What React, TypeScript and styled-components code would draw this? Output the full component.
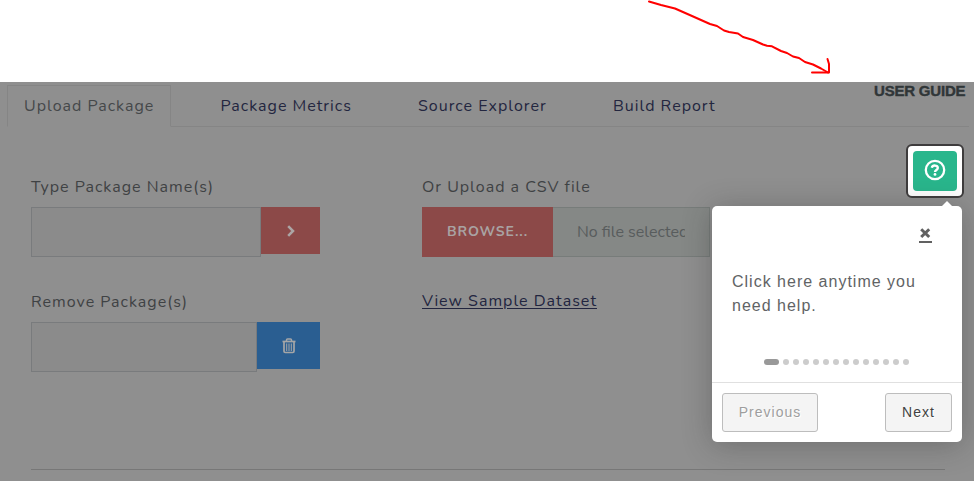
import React from "react";
import styled, { createGlobalStyle } from "styled-components";

const GlobalStyle = createGlobalStyle`
  * { box-sizing: border-box; }
  body { margin: 0; background: #fff; font-family: Nunito, Lato, sans-serif; }
  button, input { font: inherit; }
`;

const Page = styled.div`
  width: 974px;
  height: 481px;
  display: flex;
  flex-direction: column;
  position: relative;
  overflow: hidden;
`;

const Header = styled.header`
  height: 82px;
  flex: none;
  background: #fff;
`;

const Pointer = styled.svg`
  display: block;
  margin-left: 640px;
`;

const Workspace = styled.main`
  flex: 1;
  background: #8f8f8f;
  padding: 3px 5px 0 7px;
`;

const Tabs = styled.nav`
  display: flex;
  height: 42px;
  border-bottom: 1px solid #858585;
`;

const Tab = styled.a<{ $active?: boolean; $width: number }>`
  width: ${(p) => p.$width}px;
  height: 42px;
  padding: ${(p) => (p.$active ? "0 0 0 16px" : "1px 0 0 49.5px")};
  font-size: 16px;
  line-height: 41px;
  letter-spacing: 1px;
  white-space: nowrap;
  color: ${(p) => (p.$active ? "#45484a" : "#23263f")};
  ${(p) => p.$active && "border: 1px solid #858585; border-bottom-color: #8f8f8f;"}
`;

const GuideLabel = styled.div`
  position: absolute;
  top: 82px;
  left: 874px;
  font: bold 15px/17px "Liberation Sans", Arial, sans-serif;
  letter-spacing: -0.2px;
  white-space: nowrap;
  color: #303638;
  -webkit-text-stroke: 0.4px #303638;
`;

const Form = styled.section`
  display: grid;
  grid-template-columns: 289px 288px;
  grid-auto-rows: 115px;
  align-content: start;
  column-gap: 102px;
  margin: 0 24px;
  padding-top: 48px;
  height: 343px;
  width: 914px;
  border-bottom: 1px solid #777;
`;

const Field = styled.div`
  min-width: 0;
`;

const Label = styled.label`
  display: block;
  height: 32px;
  font-size: 16px;
  line-height: 24px;
  letter-spacing: 1px;
  white-space: nowrap;
  color: #3f4244;
`;

const InputRow = styled.div`
  display: flex;
  align-items: flex-start;
`;

const TextInput = styled.input`
  flex: 1;
  min-width: 0;
  height: 50px;
  border: 1px solid #797b7d;
  border-radius: 0;
  background: #8b8b8b;
  outline: none;
`;

const ActionButton = styled.button<{ $tone: string; $width: number }>`
  width: ${(p) => p.$width}px;
  height: 47px;
  padding: 0;
  border: 0;
  display: flex;
  align-items: center;
  justify-content: center;
  background: ${(p) => p.$tone};
`;

const BrowseButton = styled.button`
  width: 131px;
  height: 50px;
  border: 0;
  padding: 0 0 2px;
  background: #8c4948;
  color: #a9a3a3;
  font-size: 14px;
  font-weight: 700;
  letter-spacing: 0.9px;
`;

const FileName = styled.div`
  flex: 1;
  height: 50px;
  padding: 0 0 0 24px;
  border: 1px solid #777c7a;
  border-left: 0;
  background: #858886;
  color: #585c5d;
  font-size: 16px;
  line-height: 48px;
`;

const FileText = styled.div`
  width: 108px;
  overflow: hidden;
  white-space: nowrap;
`;

const SampleLink = styled.a`
  display: block;
  margin-top: -1px;
  font-size: 16px;
  line-height: 24px;
  letter-spacing: 1px;
  white-space: nowrap;
  color: #22253f;
  text-decoration: underline;
  text-decoration-thickness: 1px;
  text-underline-offset: 2px;
`;

const HelpFrame = styled.div`
  position: absolute;
  left: 906px;
  top: 144px;
  width: 58px;
  height: 54px;
  padding: 5px;
  border: 2px solid #3e3c3d;
  border-radius: 6px;
  background: #fff;
`;

const HelpButton = styled.button`
  display: flex;
  width: 44px;
  height: 40px;
  padding: 0 0 3px;
  align-items: center;
  justify-content: center;
  border: 0;
  border-radius: 4px;
  background: #29b68c;
`;

const Popover = styled.aside`
  position: absolute;
  left: 712px;
  top: 206px;
  width: 250px;
  height: 236px;
  display: flex;
  flex-direction: column;
  border-radius: 5px;
  background: #fff;
  box-shadow: 0 3px 30px rgba(33, 33, 33, 0.3);
  font-family: "Liberation Sans", Arial, sans-serif;
`;

const PopoverArrow = styled.div`
  position: absolute;
  right: 10px;
  top: -5px;
  border: 5px solid transparent;
  border-top: 0;
  border-bottom-color: #fff;
`;

const CloseRow = styled.div`
  height: 64px;
  display: flex;
  justify-content: flex-end;
  padding: 22px 30px 0 0;
`;

const Message = styled.p`
  margin: 0;
  padding-left: 20px;
  height: 89px;
  font-size: 16px;
  line-height: 24px;
  letter-spacing: 1px;
  color: #616365;
`;

const Steps = styled.div`
  display: flex;
  justify-content: center;
  gap: 4px;
  height: 23px;
  padding-right: 1px;
`;

const Dot = styled.span<{ $active?: boolean }>`
  width: ${(p) => (p.$active ? 15 : 6)}px;
  height: 6px;
  border-radius: 3px;
  background: ${(p) => (p.$active ? "#999" : "#ccc")};
`;

const Footer = styled.footer`
  height: 60px;
  padding: 10px;
  display: flex;
  justify-content: space-between;
  border-top: 1px solid #e0e0e0;
`;

const StepButton = styled.button<{ $width: number; $muted?: boolean }>`
  width: ${(p) => p.$width}px;
  height: 39px;
  padding: 0 0 2px;
  border: 1px solid #bdbdbd;
  border-radius: 3px;
  background: #f4f4f4;
  color: ${(p) => (p.$muted ? "#9e9e9e" : "#424242")};
  font-size: 14px;
  letter-spacing: 1px;
  text-shadow: 1px 1px 0 #fff;
`;

export default function App() {
  return (
    <Page>
      <GlobalStyle />
      <Header>
        <Pointer width="210" height="80" viewBox="640 0 210 80" fill="none" stroke="#f00" strokeWidth="2" strokeLinecap="round" strokeLinejoin="round">
          <path d="M649 1.5 L661 5 L675 8.5 L692 16 L710 24 L717 26 L724 30.5 L729 32 L738 33.5 L743 37 L753 40 L763 44.5 L767 45.7 L772 46.3 L781 51 L787 53 L793 56.5 L799 58 L805 62 L813 64.5 L821 68.5 L828 72.5" />
          <path d="M827.5 59 L829 64 L829 72.5 L812 72.5" />
        </Pointer>
      </Header>
      <Workspace>
        <Tabs>
          <Tab $active $width={164}>Upload Package</Tab>
          <Tab $width={197.5}>Package Metrics</Tab>
          <Tab $width={195}>Source Explorer</Tab>
          <Tab $width={160}>Build Report</Tab>
        </Tabs>
        <Form>
          <Field>
            <Label>Type Package Name(s)</Label>
            <InputRow>
              <TextInput aria-label="Package names" />
              <ActionButton $tone="#8c4948" $width={59} aria-label="Add packages">
                <svg width="8" height="12" viewBox="0 0 8 12" fill="none" stroke="#aca5a5" strokeWidth="2.5">
                  <path d="M1.2 1.2 L6 6 L1.2 10.8" />
                </svg>
              </ActionButton>
            </InputRow>
          </Field>
          <Field>
            <Label>Or Upload a CSV file</Label>
            <InputRow>
              <BrowseButton>BROWSE...</BrowseButton>
              <FileName><FileText>No file selected</FileText></FileName>
            </InputRow>
          </Field>
          <Field>
            <Label>Remove Package(s)</Label>
            <InputRow>
              <TextInput aria-label="Packages to remove" />
              <ActionButton $tone="#2a5e91" $width={63} aria-label="Remove packages">
                <svg width="14" height="16" viewBox="0 0 14 16" fill="none" stroke="#a5a6a7">
                  <path d="M0.5 3.5 H13.5" strokeWidth="1.7" />
                  <path d="M4.5 3 V2 Q4.5 1 5.5 1 H8.5 Q9.5 1 9.5 2 V3" strokeWidth="1.5" />
                  <path d="M2 4 V13.2 Q2 14.5 3.2 14.5 H10.8 Q12 14.5 12 13.2 V4" strokeWidth="1.7" />
                  <path d="M4.7 5.5 V13 M7 5.5 V13 M9.3 5.5 V13" strokeWidth="1" />
                </svg>
              </ActionButton>
            </InputRow>
          </Field>
          <Field>
            <SampleLink>View Sample Dataset</SampleLink>
          </Field>
        </Form>
      </Workspace>
      <GuideLabel>USER GUIDE</GuideLabel>
      <HelpFrame>
        <HelpButton aria-label="Help">
          <svg width="22" height="22" viewBox="0 0 22 22" fill="none" stroke="#fff">
            <circle cx="11" cy="11" r="9.2" strokeWidth="2.3" />
            <path d="M7.8 8.8 C8.6 5.6 14 6 13.8 9 C13.7 10.9 11 11 11 13" strokeWidth="2.4" />
            <circle cx="11" cy="15.4" r="1.4" fill="#fff" stroke="none" />
          </svg>
        </HelpButton>
      </HelpFrame>
      <Popover>
        <PopoverArrow />
        <CloseRow>
          <svg width="13" height="16" viewBox="0 0 13 16" fill="none" stroke="#616161">
            <path d="M2.2 1.2 L10.2 9 M10.2 1.2 L2.2 9" strokeWidth="3" />
            <path d="M0 14 H13" strokeWidth="2" />
          </svg>
        </CloseRow>
        <Message>Click here anytime you<br />need help.</Message>
        <Steps>
          {Array.from({ length: 14 }, (_, i) => <Dot key={i} $active={i === 0} />)}
        </Steps>
        <Footer>
          <StepButton $width={96} $muted>Previous</StepButton>
          <StepButton $width={67}>Next</StepButton>
        </Footer>
      </Popover>
    </Page>
  );
}
